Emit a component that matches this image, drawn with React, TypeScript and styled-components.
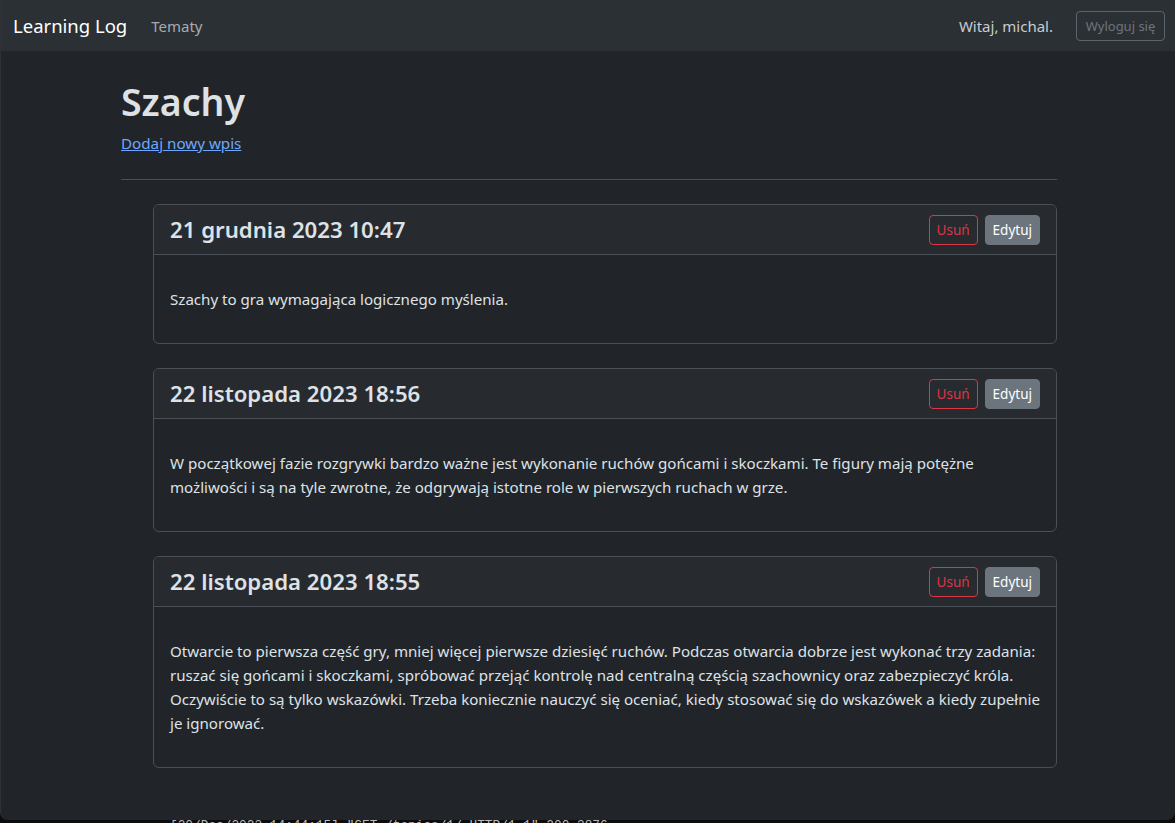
import React from 'react';
import styled, { createGlobalStyle } from 'styled-components';

const GlobalStyle = createGlobalStyle`
  html, body {
    margin: 0;
    padding: 0;
    background-color: #0c0c0c;
    overflow: hidden;
  }
  * {
    box-sizing: border-box;
  }
`;

type Entry = {
  date: string;
  lines: string[];
};

const entries: Entry[] = [
  {
    date: '21 grudnia 2023 10:47',
    lines: ['Szachy to gra wymagająca logicznego myślenia.'],
  },
  {
    date: '22 listopada 2023 18:56',
    lines: [
      'W początkowej fazie rozgrywki bardzo ważne jest wykonanie ruchów gońcami i skoczkami. Te figury mają potężne',
      'możliwości i są na tyle zwrotne, że odgrywają istotne role w pierwszych ruchach w grze.',
    ],
  },
  {
    date: '22 listopada 2023 18:55',
    lines: [
      'Otwarcie to pierwsza część gry, mniej więcej pierwsze dziesięć ruchów. Podczas otwarcia dobrze jest wykonać trzy zadania:',
      'ruszać się gońcami i skoczkami, spróbować przejąć kontrolę nad centralną częścią szachownicy oraz zabezpieczyć króla.',
      'Oczywiście to są tylko wskazówki. Trzeba koniecznie nauczyć się oceniać, kiedy stosować się do wskazówek a kiedy zupełnie',
      'je ignorować.',
    ],
  },
];

const App = () => {
  return (
    <>
      <GlobalStyle />
      <Window>
        <Navbar>
          <Brand>Learning Log</Brand>
          <NavLink>Tematy</NavLink>
          <NavRight>
            <NavText>Witaj, michal.</NavText>
            <LogoutButton>Wyloguj się</LogoutButton>
          </NavRight>
        </Navbar>
        <Container>
          <Title>Szachy</Title>
          <LinkRow>
            <NewEntryLink href="#">Dodaj nowy wpis</NewEntryLink>
          </LinkRow>
          <Divider />
          <EntryList>
            {entries.map((entry) => (
              <Card key={entry.date}>
                <CardHeader>
                  <CardTitle>{entry.date}</CardTitle>
                  <Actions>
                    <Button variant="danger">Usuń</Button>
                    <Button variant="secondary">Edytuj</Button>
                  </Actions>
                </CardHeader>
                <CardBody>
                  <EntryText>
                    {entry.lines.map((line, i) => (
                      <Line key={i}>{line}</Line>
                    ))}
                  </EntryText>
                </CardBody>
              </Card>
            ))}
          </EntryList>
        </Container>
      </Window>
      <Terminal>[20/Dec/2023 14:44:15] "GET /topics/1/ HTTP/1.1" 200 3876</Terminal>
    </>
  );
};

export default App;

const Window = styled.div`
  height: 820px;
  background-color: #212529;
  border-left: 1px solid #2e3236;
  border-radius: 0 0 8px 8px;
  overflow: hidden;
  font-family: 'Noto Sans', 'Open Sans', sans-serif;
  color: #dee2e6;
`;

const Navbar = styled.nav`
  height: 51px;
  background-color: #2b3035;
  display: flex;
  align-items: center;
  padding: 0 10px 0 12px;
`;

const Brand = styled.span`
  font-size: 18.5px;
  color: #ffffff;
  margin-right: 24px;
`;

const NavLink = styled.span`
  font-size: 15px;
  color: rgba(222, 226, 230, 0.7);
`;

const NavRight = styled.div`
  margin-left: auto;
  display: flex;
  align-items: center;
  gap: 23px;
`;

const NavText = styled.span`
  font-size: 15px;
  color: #c9ccd0;
`;

const LogoutButton = styled.button`
  font-family: inherit;
  font-size: 13px;
  color: #6c757d;
  background: transparent;
  border: 1px solid #5c636a;
  border-radius: 4px;
  height: 30px;
  width: 89px;
  padding: 0;
`;

const Container = styled.main`
  width: 936px;
  margin-left: calc(50% - 467px);
`;

const Title = styled.h1`
  margin: 27px 0 5px;
  font-size: 37.5px;
  font-weight: 600;
  line-height: 48px;
  color: #dee2e6;
`;

const LinkRow = styled.p`
  margin: 0 0 24px;
  line-height: 24px;
  font-size: 15.2px;
`;

const NewEntryLink = styled.a`
  color: #6ea8fe;
  text-decoration: underline;
`;

const Divider = styled.hr`
  margin: 0 0 24px;
  border: 0;
  border-top: 1px solid #4c4f53;
`;

const EntryList = styled.div`
  margin-left: 32px;
  display: flex;
  flex-direction: column;
  gap: 24px;
`;

const Card = styled.section`
  border: 1px solid #495057;
  border-radius: 6px;
  overflow: hidden;
`;

const CardHeader = styled.header`
  display: flex;
  align-items: center;
  justify-content: space-between;
  padding: 9px 16px;
  background-color: #272b30;
  border-bottom: 1px solid #495057;
`;

const CardTitle = styled.h4`
  margin: 0;
  font-size: 22.2px;
  font-weight: 600;
  line-height: 31px;
  color: #dee2e6;
`;

const Actions = styled.div`
  display: flex;
  gap: 7px;
`;

const Button = styled.button<{ variant: 'danger' | 'secondary' }>`
  font-family: inherit;
  font-size: 13.5px;
  height: 30px;
  padding: 0 7px;
  border-radius: 4px;
  border: 1px solid ${(p) => (p.variant === 'danger' ? '#dc3545' : '#6c757d')};
  background-color: ${(p) => (p.variant === 'danger' ? 'transparent' : '#6c757d')};
  color: ${(p) => (p.variant === 'danger' ? '#dc3545' : '#ffffff')};
`;

const CardBody = styled.div`
  padding: 32px 16px;
`;

const EntryText = styled.p`
  margin: 0;
  font-size: 15.1px;
  line-height: 24px;
  color: #dee2e6;
`;

const Line = styled.span`
  display: block;
  white-space: nowrap;
`;

const Terminal = styled.div`
  height: 3px;
  overflow: hidden;
  padding-left: 170px;
  font-family: 'Liberation Mono', monospace;
  font-size: 12.8px;
  line-height: 12px;
  color: #bbbbbb;
`;
